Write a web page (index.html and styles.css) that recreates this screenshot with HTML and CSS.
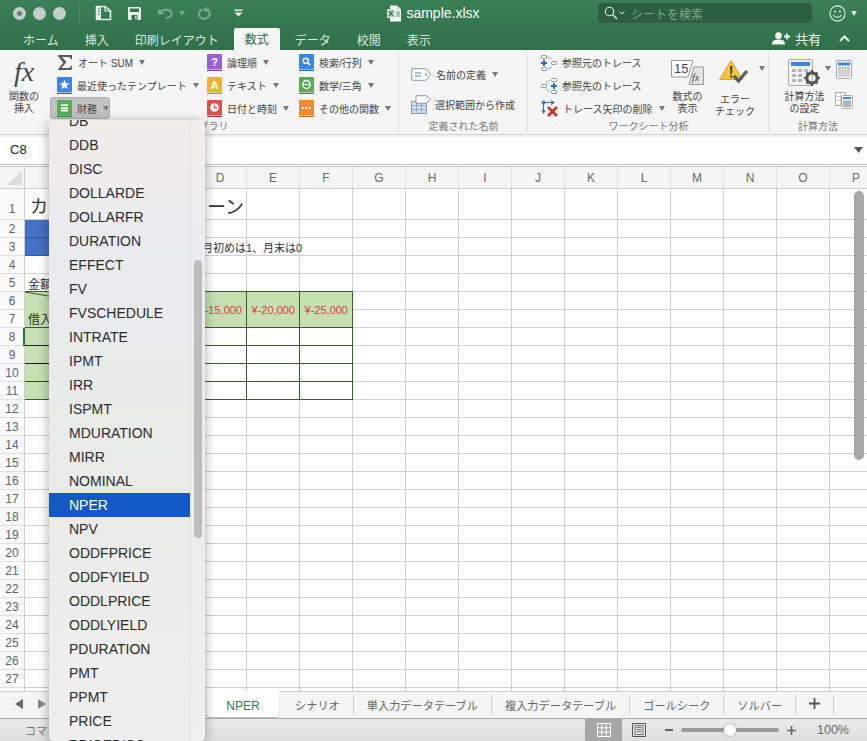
FILE: index.html
```html
<!DOCTYPE html>
<html lang="ja">
<head>
<meta charset="utf-8">
<title>sample.xlsx</title>
<link rel="stylesheet" href="styles.css">
</head>
<body>
<div class="app">
  <header class="chrome">
    <div class="titlebar">
      <div class="tb-left">
        <span class="light light-main"></span><span class="light"></span><span class="light"></span>
        <span class="tb-sep"></span>
        <svg class="qa qa-side" width="17" height="16" viewBox="0 0 17 16"><path d="M1.5 1.5H10L15.5 6V14.5H1.5Z" fill="none" stroke="#e8f0ea" stroke-width="1.6"/><path d="M10 1.5V6H15.5" fill="none" stroke="#e8f0ea" stroke-width="1.2"/><path d="M2 2H6V14H2Z" fill="#e8f0ea"/><path d="M3 4H5M3 6.5H5M3 9H5" stroke="#33784f"/></svg>
        <svg class="qa qa-save" width="15" height="15" viewBox="0 0 15 15"><path d="M1 2a1 1 0 0 1 1-1H13L14 2V13a1 1 0 0 1-1 1H2a1 1 0 0 1-1-1Z" fill="#e8f0ea"/><path d="M3 2.5H12V6H3Z" fill="#33784f"/><path d="M4.5 9H10.5V14H4.5Z" fill="#33784f"/><path d="M8 10.2H9.6V12.8H8Z" fill="#e8f0ea"/></svg>
        <svg class="qa qa-undo" width="16" height="12" viewBox="0 0 16 12"><path d="M2 6.5C3.5 2.5 12 1 14.5 5.5C15.5 8 13 11 9 11" fill="none" stroke="#7ea98e" stroke-width="2"/><path d="M0.5 1.5L2 8L7.5 6.5Z" fill="#7ea98e"/></svg>
        <span class="caret caret-dim"></span>
        <svg class="qa qa-redo" width="13" height="14" viewBox="0 0 13 14"><path d="M4 3.5C1 5 0 8 2 11C4 13.5 9 13.5 11 10.5C12 8.5 12 5 9.5 3" fill="none" stroke="#7ea98e" stroke-width="2"/><path d="M9.5 0.5V6.5L4.5 3.5Z" fill="#7ea98e"/></svg>
        <svg class="qa qa-custom" width="9" height="8" viewBox="0 0 9 8"><path d="M0.5 0.5H8.5V2H0.5Z" fill="#e8f0ea"/><path d="M0.5 3.5H8.5L4.5 7.5Z" fill="#e8f0ea"/></svg>
      </div>
      <div class="doc-title">
        <svg width="15" height="17" viewBox="0 0 15 17"><path d="M3 0.5H10L14 4V16.5H3Z" fill="#f4f7f5"/><path d="M10 0.5V4H14" fill="none" stroke="#9ab" stroke-width=".6"/><path d="M0 4H8V13H0Z" fill="#cfdcd4"/><path d="M2 6L6 11M6 6L2 11" stroke="#33784f" stroke-width="1.4"/><path d="M9 7H13M9 9H13M9 11H13" stroke="#33784f" stroke-width=".8"/></svg>
        <span>sample.xlsx</span>
      </div>
      <div class="tb-right">
        <div class="search">
          <svg width="14" height="14" viewBox="0 0 14 14"><circle cx="5.5" cy="5.5" r="4.2" fill="none" stroke="#e8f0ea" stroke-width="1.1"/><path d="M8.5 8.5L13 13" stroke="#e8f0ea" stroke-width="1.3"/></svg>
          <svg class="search-chev" width="6" height="4" viewBox="0 0 6 4"><path d="M.5 .5L3 3L5.5 .5" fill="none" stroke="#e8f0ea"/></svg>
          <span>シートを検索</span>
        </div>
        <svg class="smile" width="17" height="17" viewBox="0 0 17 17"><circle cx="8.5" cy="8.5" r="7.6" fill="none" stroke="#e8f0ea" stroke-width="1.1"/><circle cx="6" cy="6.5" r="1" fill="#e8f0ea"/><circle cx="11" cy="6.5" r="1" fill="#e8f0ea"/><path d="M4.5 10C6 13 11 13 12.5 10" fill="none" stroke="#e8f0ea" stroke-width="1.1"/></svg>
        <span class="caret caret-light"></span>
      </div>
    </div>
    <div class="tabbar">
      <nav class="tabs">
        <span>ホーム</span><span>挿入</span><span>印刷レイアウト</span><span class="tab-active">数式</span><span>データ</span><span>校閲</span><span>表示</span>
      </nav>
      <div class="share">
        <svg width="19" height="13" viewBox="0 0 19 13"><circle cx="6.5" cy="3.6" r="3.4" fill="#f0f5f1"/><path d="M0 12.5C0 8 3 7.4 6.5 7.4S13 8 13 12.5Z" fill="#f0f5f1"/><path d="M15 1.5V7.5M12 4.5H18" stroke="#f0f5f1" stroke-width="1.8"/></svg>
        <span>共有</span>
        <svg class="share-chev" width="11" height="7" viewBox="0 0 11 7"><path d="M1 6L5.5 1.5L10 6" fill="none" stroke="#f0f5f1" stroke-width="2"/></svg>
      </div>
    </div>
  </header>

  <section class="ribbon">
    <div class="group group-lib">
      <div class="group-body">
        <div class="big big-fx">
          <span class="fx">fx</span>
          <span class="big-label">関数の<br>挿入</span>
        </div>
        <div class="rib-col col-a">
          <div class="rib-item"><svg class="ico" width="16" height="17" viewBox="0 0 16 17"><path d="M1 1H15V5.5H14C13.8 4 13 3 11 3H5L9.5 8L4.5 14H11.5C13 14 14 13 14.3 11.5H15.2L14.6 16H1V15.2L6.3 8.8L1 2Z" fill="#5a5a5a"/></svg><span>オート SUM</span><i class="caret"></i></div>
          <div class="rib-item"><svg class="ico" width="15" height="17" viewBox="0 0 15 17"><rect width="15" height="15" rx="1" fill="#3d85e0"/><rect y="15.6" width="15" height="1.4" fill="#2c66b0"/><path d="M7.5 2.8L8.9 6.2L12.4 6.4L9.7 8.7L10.6 12.1L7.5 10.2L4.4 12.1L5.3 8.7L2.6 6.4L6.1 6.2Z" fill="#fff"/></svg><span>最近使ったテンプレート</span><i class="caret"></i></div>
          <div class="rib-item rib-pressed"><svg class="ico" width="15" height="17" viewBox="0 0 15 17"><rect width="15" height="15" rx="1" fill="#56ad55"/><rect y="15.6" width="15" height="1.4" fill="#3f8a40"/><path d="M4 4.2H11V6H4ZM4 6.9H11V8.7H4ZM4 9.6H11V11.4H4Z" fill="#fff"/></svg><span>財務</span><i class="caret"></i></div>
        </div>
        <div class="rib-col col-b">
          <div class="rib-item"><svg class="ico" width="15" height="17" viewBox="0 0 15 17"><rect width="15" height="15" rx="1" fill="#9a5fd0"/><rect y="15.6" width="15" height="1.4" fill="#7444a6"/><text x="7.5" y="12" text-anchor="middle" class="ico-text">?</text></svg><span>論理順</span><i class="caret"></i></div>
          <div class="rib-item"><svg class="ico" width="15" height="17" viewBox="0 0 15 17"><rect width="15" height="15" rx="1" fill="#f0b429"/><rect y="15.6" width="15" height="1.4" fill="#c58f14"/><text x="7.5" y="12" text-anchor="middle" class="ico-text">A</text></svg><span>テキスト</span><i class="caret"></i></div>
          <div class="rib-item"><svg class="ico" width="15" height="17" viewBox="0 0 15 17"><rect width="15" height="15" rx="1" fill="#df4f4f"/><rect y="15.6" width="15" height="1.4" fill="#b23535"/><circle cx="7.5" cy="7.5" r="4.3" fill="#fff"/><path d="M7.5 4.8V7.8H10" fill="none" stroke="#df4f4f" stroke-width="1.2"/></svg><span>日付と時刻</span><i class="caret"></i></div>
        </div>
        <div class="rib-col col-c">
          <div class="rib-item"><svg class="ico" width="15" height="17" viewBox="0 0 15 17"><rect width="15" height="15" rx="1" fill="#3d85e0"/><rect y="15.6" width="15" height="1.4" fill="#2c66b0"/><circle cx="6.7" cy="6.7" r="2.5" fill="none" stroke="#fff" stroke-width="1.4"/><path d="M8.5 8.5L11.2 11.2" stroke="#fff" stroke-width="1.6"/></svg><span>検索/行列</span><i class="caret"></i></div>
          <div class="rib-item"><svg class="ico" width="15" height="17" viewBox="0 0 15 17"><rect width="15" height="15" rx="1" fill="#56ad55"/><rect y="15.6" width="15" height="1.4" fill="#3f8a40"/><ellipse cx="7.5" cy="7.5" rx="3.6" ry="4" fill="none" stroke="#fff" stroke-width="1.3"/><path d="M4.5 7.5H10.5" stroke="#fff" stroke-width="1.2"/></svg><span>数学/三角</span><i class="caret"></i></div>
          <div class="rib-item"><svg class="ico" width="15" height="17" viewBox="0 0 15 17"><rect width="15" height="15" rx="1" fill="#f08a2c"/><rect y="15.6" width="15" height="1.4" fill="#c46a18"/><path d="M3 6.7H5V8.7H3ZM6.5 6.7H8.5V8.7H6.5ZM10 6.7H12V8.7H10Z" fill="#fff"/></svg><span>その他の関数</span><i class="caret"></i></div>
        </div>
      </div>
      <div class="group-label label-lib">関数ライブラリ</div>
    </div>

    <div class="group group-names">
      <div class="group-body">
        <div class="rib-col col-names">
          <div class="rib-item"><svg class="ico" width="21" height="13" viewBox="0 0 21 13"><path d="M2 .7H15L20 6.5L15 12.3H2A1.3 1.3 0 0 1 .7 11V2A1.3 1.3 0 0 1 2 .7Z" fill="#fff" stroke="#8a9aa8"/><path d="M4 5H10M4 8H10" stroke="#3d85e0" stroke-width="1.1"/><circle cx="15" cy="6.5" r="1" fill="#8a9aa8"/></svg><span>名前の定義</span><i class="caret"></i></div>
          <div class="rib-item"><svg class="ico" width="20" height="19" viewBox="0 0 20 19"><rect x=".5" y="6.5" width="15" height="12" fill="#cfe0f2" stroke="#8a9aa8"/><path d="M.5 10.5H15.5M.5 14.5H15.5M5.5 6.5V18.5M10.5 6.5V18.5" stroke="#8a9aa8" stroke-width=".7"/><path d="M5 .7H15L19.5 4.5L15 8.3H5Z" fill="#fff" stroke="#8a9aa8"/></svg><span>選択範囲から作成</span></div>
        </div>
      </div>
      <div class="group-label">定義された名前</div>
    </div>

    <div class="group group-audit">
      <div class="group-body">
        <div class="rib-col col-trace">
          <div class="rib-item"><svg class="ico" width="16" height="16" viewBox="0 0 16 16"><rect x=".5" y=".5" width="5" height="3" rx="1" fill="#fff" stroke="#777" stroke-width=".8"/><rect x=".5" y="12.5" width="5" height="3" rx="1" fill="#fff" stroke="#777" stroke-width=".8"/><rect x="10.5" y="6.5" width="5" height="3" rx="1" fill="#fff" stroke="#777" stroke-width=".8"/><path d="M3 5V11M0 8H6" stroke="#2b6fc4" stroke-width="2"/><path d="M7 2L11 4M7 14L11 12" stroke="#3d85e0" stroke-dasharray="1.5 1"/></svg><span>参照元のトレース</span></div>
          <div class="rib-item"><svg class="ico" width="16" height="16" viewBox="0 0 16 16"><rect x="10.5" y=".5" width="5" height="3" rx="1" fill="#fff" stroke="#777" stroke-width=".8"/><rect x="10.5" y="12.5" width="5" height="3" rx="1" fill="#fff" stroke="#777" stroke-width=".8"/><rect x=".5" y="6.5" width="5" height="3" rx="1" fill="#fff" stroke="#777" stroke-width=".8"/><path d="M13 5V11M10 8H16" stroke="#2b6fc4" stroke-width="2"/><path d="M5 5L9 2M5 11L9 14" stroke="#3d85e0" stroke-dasharray="1.5 1"/></svg><span>参照先のトレース</span></div>
          <div class="rib-item"><svg class="ico" width="17" height="17" viewBox="0 0 17 17"><circle cx="2.5" cy="2.5" r="2" fill="#3d85e0"/><path d="M3 2.5H12M10 .5L13 2.5L10 4.5M2.5 4V12M.7 10L2.5 13L4.3 10" fill="none" stroke="#3a6ea8" stroke-width="1.1"/><path d="M7 7L16 16M16 7L7 16" stroke="#cf2d2d" stroke-width="2.6"/></svg><span>トレース矢印の削除</span><i class="caret"></i></div>
        </div>
        <div class="big big-show">
          <svg width="33" height="25" viewBox="0 0 33 25"><path d="M.5 .5H22L17 17H.5Z" fill="#fff" stroke="#999"/><path d="M18 24.5L23 7H32.5V24.5Z" fill="#e4e4e4" stroke="#999"/><text x="3" y="13" class="show-num">15</text><text x="21" y="21" class="show-fx">fx</text></svg>
          <span class="big-label">数式の<br>表示</span>
        </div>
        <div class="big big-err">
          <div class="err-ico">
            <svg width="37" height="26" viewBox="0 0 37 26"><path d="M12 1.5L23.5 20.5H.5Z" fill="#f3c343" stroke="#d9a520"/><path d="M11 7H13.4L13 15H11.4ZM11.2 16.2H13.2V18.4H11.2Z" fill="#4a3b10"/><path d="M15 17L19.5 22L28 12" fill="none" stroke="#5f5f5f" stroke-width="3.4"/></svg>
            <i class="caret"></i>
          </div>
          <span class="big-label label-err">エラー<br>チェック</span>
        </div>
      </div>
      <div class="group-label">ワークシート分析</div>
    </div>

    <div class="group group-calc">
      <div class="group-body">
        <div class="big big-calc">
          <div class="err-ico">
            <svg width="34" height="28" viewBox="0 0 34 28"><rect x=".5" y=".5" width="24" height="26" rx="1.5" fill="#f4f4f4" stroke="#aaa"/><rect x="3" y="3" width="19" height="4" fill="#3d85e0"/><path d="M4 10H8V13H4ZM10 10H14V13H10ZM16 10H20V13H16ZM4 15H8V18H4ZM10 15H14V18H10ZM4 20H8V23H4ZM10 20H14V23H10Z" fill="#b5b5b5"/><circle cx="24" cy="19" r="5.2" fill="none" stroke="#555" stroke-width="3.2"/><path d="M24 11V14M24 24V27M16 19H19M29 19H32M18.5 13.5L20.5 15.5M27.5 22.5L29.5 24.5M18.5 24.5L20.5 22.5M27.5 15.5L29.5 13.5" stroke="#555" stroke-width="2.2"/></svg>
            <i class="caret"></i>
          </div>
          <span class="big-label">計算方法<br>の設定</span>
        </div>
        <div class="calc-small">
          <svg width="16" height="19" viewBox="0 0 16 19"><rect x=".5" y=".5" width="15" height="18" rx="1.5" fill="#f4f4f4" stroke="#aaa"/><rect x="2" y="2.5" width="12" height="3" fill="#3d85e0"/><path d="M2.5 7H13.5V16.5H2.5Z" fill="#b5b5b5"/><path d="M2 9.5H14M2 12H14M2 14.5H14M5.5 7V17M8 7V17M10.5 7V17" stroke="#f4f4f4" stroke-width=".7"/></svg>
          <svg width="18" height="17" viewBox="0 0 18 17"><rect x=".5" y=".5" width="10" height="13" fill="#fff" stroke="#aaa"/><path d="M.5 4.5H10.5M.5 8.5H10.5M5.5 .5V13.5" stroke="#bbb" stroke-width=".7"/><rect x="6.5" y="3.5" width="11" height="13" rx="1" fill="#f4f4f4" stroke="#aaa"/><rect x="8" y="5" width="8" height="2" fill="#3d85e0"/><path d="M8 8.5H16V15H8Z" fill="#b5b5b5"/></svg>
        </div>
      </div>
      <div class="group-label">計算方法</div>
    </div>
  </section>

  <section class="formula">
    <span class="name-box">C8</span>
    <svg class="formula-arrow" width="9" height="6" viewBox="0 0 9 6"><path d="M0 0H9L4.5 6Z" fill="#555"/></svg>
  </section>

  <main class="sheet">
    <div class="col-heads">
      <div class="corner"><svg width="17" height="16" viewBox="0 0 17 16"><path d="M16 1V15H1Z" fill="#dcdcdc"/></svg></div>
      <span class="col-a-head">A</span><span>B</span><span>C</span><span>D</span><span>E</span><span>F</span><span>G</span><span>H</span><span>I</span><span>J</span><span>K</span><span>L</span><span>M</span><span>N</span><span>O</span><span>P</span>
    </div>
    <div class="sheet-body">
      <div class="row-heads">
        <span class="row-first">1</span><span>2</span><span>3</span><span>4</span><span>5</span><span>6</span><span>7</span><span>8</span><span>9</span><span class="row-sel">10</span><span class="row-sel">11</span><span>12</span><span>13</span><span>14</span><span>15</span><span>16</span><span>17</span><span>18</span><span>19</span><span>20</span><span>21</span><span>22</span><span>23</span><span>24</span><span>25</span><span>26</span><span>27</span><span>28</span>
      </div>
      <div class="cells">
        <div class="cell title-a">カ</div>
        <div class="cell title-d">ーン</div>
        <div class="cell blue blue-2"></div>
        <div class="cell blue blue-3"></div>
        <div class="cell note-d">月初めは1、月末は0</div>
        <div class="cell amount-a">金額</div>
        <div class="cell thead corner-a">
          <svg class="diag" viewBox="0 0 100 100" preserveAspectRatio="none"><path d="M0 0L100 82" stroke="#3a5a2a" stroke-width="1" vector-effect="non-scaling-stroke"/></svg>
          <span class="loan">借入</span>
        </div>
        <div class="cell thead money col-d-h">¥-15,000</div>
        <div class="cell thead money col-e-h">¥-20,000</div>
        <div class="cell thead money col-f-h">¥-25,000</div>
        <div class="cell side side-8"></div>
        <div class="cell side side-9"></div>
        <div class="cell side side-10"></div>
        <div class="cell side side-11"></div>
        <div class="cell tbody d8"></div><div class="cell tbody e8"></div><div class="cell tbody f8"></div>
        <div class="cell tbody d9"></div><div class="cell tbody e9"></div><div class="cell tbody f9"></div>
        <div class="cell tbody d10"></div><div class="cell tbody e10"></div><div class="cell tbody f10"></div>
        <div class="cell tbody d11"></div><div class="cell tbody e11"></div><div class="cell tbody f11"></div>
      </div>
    </div>
    <div class="sheet-scroll"></div>
  </main>

  <section class="sheet-tabs">
    <div class="sheet-nav">
      <svg width="8" height="10" viewBox="0 0 8 10"><path d="M8 0V10L0 5Z" fill="#666"/></svg>
      <svg width="8" height="10" viewBox="0 0 8 10"><path d="M0 0V10L8 5Z" fill="#888"/></svg>
    </div>
    <div class="stabs">
      <span class="stab stab-active">NPER</span>
      <span class="stab">シナリオ</span>
      <span class="stab">単入力データテーブル</span>
      <span class="stab">複入力データテーブル</span>
      <span class="stab">ゴールシーク</span>
      <span class="stab">ソルバー</span>
      <span class="stab stab-add"><svg width="11" height="11" viewBox="0 0 11 11"><path d="M5.5 0V11M0 5.5H11" stroke="#555" stroke-width="1.8"/></svg></span>
    </div>
  </section>

  <footer class="status">
    <span class="status-text">コマンド</span>
    <div class="view-btn">
      <svg width="14" height="14" viewBox="0 0 14 14"><path d="M.5 .5H13.5V13.5H.5ZM.5 4.8H13.5M.5 9.2H13.5M4.8 .5V13.5M9.2 .5V13.5" fill="none" stroke="#fff"/></svg>
    </div>
    <svg class="page-btn" width="14" height="14" viewBox="0 0 14 14"><path d="M.5 .5H13.5V13.5H.5Z" fill="none" stroke="#555"/><path d="M3 2.5H11V11.5H3Z" fill="none" stroke="#555" stroke-width=".8"/><path d="M4.5 4.5H9.5M4.5 6.5H9.5M4.5 8.5H9.5" stroke="#555" stroke-width=".8"/></svg>
    <span class="zoom-minus"></span>
    <div class="slider"><span class="knob"></span></div>
    <svg class="zoom-plus" width="9" height="9" viewBox="0 0 9 9"><path d="M4.5 0V9M0 4.5H9" stroke="#666" stroke-width="1.7"/></svg>
    <span class="zoom-val">100%</span>
  </footer>

  <div class="menu">
    <ul class="menu-list">
      <li>DB</li><li>DDB</li><li>DISC</li><li>DOLLARDE</li><li>DOLLARFR</li><li>DURATION</li><li>EFFECT</li><li>FV</li><li>FVSCHEDULE</li><li>INTRATE</li><li>IPMT</li><li>IRR</li><li>ISPMT</li><li>MDURATION</li><li>MIRR</li><li>NOMINAL</li><li class="menu-sel">NPER</li><li>NPV</li><li>ODDFPRICE</li><li>ODDFYIELD</li><li>ODDLPRICE</li><li>ODDLYIELD</li><li>PDURATION</li><li>PMT</li><li>PPMT</li><li>PRICE</li><li>PRICEDISC</li>
    </ul>
    <div class="menu-gutter"><span class="menu-thumb"></span></div>
  </div>
</div>
</body>
</html>
```

FILE: styles.css
```css
* { box-sizing: border-box; }
html, body { margin: 0; height: 100%; overflow: hidden; }
body { font-family: "Liberation Sans", "Noto Sans CJK JP", sans-serif; color: #333; background: #fff; }
.app { position: relative; width: 867px; height: 741px; display: flex; flex-direction: column; overflow: hidden; }

/* chrome */
.chrome { height: 50px; background: linear-gradient(#3a7f56, #2f7049); color: #fff; flex: none; }
.titlebar { height: 26px; display: grid; grid-template-columns: 1fr auto 1fr; align-items: center; }
.tb-left { display: flex; align-items: center; padding-left: 13px; }
.light { width: 13px; height: 13px; border-radius: 50%; background: #c5cdc8; margin-right: 7px; flex: none; position: relative; }
.light-main::after { content: ""; position: absolute; left: 4px; top: 4px; width: 5px; height: 5px; border-radius: 50%; background: #6d7a72; }
.tb-sep { width: 1px; height: 20px; background: #4a8a64; margin-left: 6px; }
.qa { flex: none; }
.qa-side { margin-left: 15px; }
.qa-save { margin-left: 15px; }
.qa-undo { margin-left: 15px; }
.qa-redo { margin-left: 13px; }
.qa-custom { margin-left: 23px; }
.caret { display: inline-block; width: 0; height: 0; border-left: 3.5px solid transparent; border-right: 3.5px solid transparent; border-top: 5px solid #777; flex: none; }
.caret-dim { border-top-color: #7ea98e; margin-left: 6px; }
.caret-light { border-top-color: #dfe9e2; margin-left: 5px; }
.doc-title { display: flex; align-items: center; gap: 4px; font-size: 14px; color: #fff; }
.tb-right { display: flex; align-items: center; justify-content: flex-end; padding-right: 10px; }
.search { width: 214px; height: 20px; border-radius: 4px; background: #2a5f40; display: flex; align-items: center; padding-left: 6px; font-size: 12px; color: #7ea78d; margin-right: 17px; }
.search-chev { margin: 0 6px 0 1px; }
.smile { flex: none; }

.tabbar { height: 24px; display: flex; justify-content: space-between; align-items: flex-end; }
.tabs { display: flex; gap: 26px; padding-left: 23px; font-size: 12px; color: #dbe8df; height: 22px; align-items: center; }
.tab-active { background: #f5f5f5; color: #2a6e47; height: 22px; padding: 0 11px; margin: 0 -11px; line-height: 24px; border-radius: 2px 2px 0 0; }
.share { display: flex; align-items: center; height: 24px; font-size: 13px; color: #f0f5f1; padding-right: 17px; gap: 4px; }
.share-chev { margin-left: 14px; }

/* ribbon */
.ribbon { height: 85px; flex: none; background: #f5f5f5; display: flex; border-bottom: 1px solid #d4d4d4; font-size: 10px; color: #444; }
.group { display: flex; flex-direction: column; position: relative; }
.group::after { content: ""; position: absolute; right: 0; top: 4px; bottom: 2px; width: 1px; background: #dedede; }
.group-calc::after { display: none; }
.group-lib { width: 399px; }
.group-names { width: 129px; }
.group-audit { width: 241px; }
.group-calc { width: 98px; }
.group-body { display: flex; height: 70px; flex: none; }
.group-label { flex: 1; text-align: center; font-size: 10px; color: #777; line-height: 14px; }
.label-lib { padding-right: 12px; }
.rib-col { display: flex; flex-direction: column; padding-top: 1px; }
.rib-item { height: 23px; display: flex; align-items: center; white-space: nowrap; }
.rib-item .caret { margin-left: 6px; border-left-width: 3px; border-right-width: 3px; border-top-width: 5px; }
.ico { flex: none; margin-right: 5px; }
.col-a { width: 150px; margin-left: 9px; }
.col-b { width: 92px; }
.col-c { width: 99px; }
.rib-pressed { width: 60px; margin-left: -7px; padding-left: 7px; background: #c3c3c3; border: 1px solid #aeaeae; border-radius: 3px; height: 22px; margin-top: 0; padding-left: 6px; }
.ico-text { font: bold 11px "Liberation Sans", sans-serif; fill: #fff; }
.big { display: flex; flex-direction: column; align-items: center; }
.big-label { line-height: 12px; text-align: center; }
.big-fx { width: 48px; padding-top: 3px; }
.fx { font: italic 28px "Liberation Serif", serif; color: #484848; line-height: 37px; height: 38px; }
.col-names { padding: 9px 0 0 12px; width: 129px; }
.col-names .rib-item { height: 31px; }
.col-names .rib-item .ico { margin-right: 4px; }
.col-trace { padding-left: 13px; width: 141px; }
.col-trace .rib-item .ico { margin-right: 5px; }
.big-show { width: 33px; margin-left: 2px; padding-top: 10px; }
.big-show svg { margin-bottom: 6px; }
.show-num { font: 13px "Liberation Sans", sans-serif; fill: #444; }
.show-fx { font: italic 10px "Liberation Serif", serif; fill: #444; }
.big-err { margin-left: 12px; width: 52px; padding-top: 9px; }
.err-ico { display: flex; align-items: flex-start; height: 32px; }
.err-ico .caret { margin: 7px 0 0 3px; border-left-width: 3px; border-right-width: 3px; }
.label-err { margin-right: 14px; white-space: nowrap; margin-top: 3px; margin-left: 0; }
.big-calc { padding: 9px 0 0 16px; width: 64px; }
.big-calc .err-ico { height: 32px; }
.big-calc .big-label { white-space: nowrap; margin-left: -9px; }
.calc-small { display: flex; flex-direction: column; gap: 13px; padding: 10px 0 0 2px; align-items: center; }

/* formula */
.formula { height: 32px; flex: none; background: #fff; border-top: 2px solid #f0f0f0; display: flex; align-items: center; justify-content: space-between; padding: 0 4px 2px 10px; border-bottom: 3px double #c2c2c2; }
.name-box { font-size: 13px; color: #222; }

/* sheet */
.sheet { flex: 1; min-height: 0; position: relative; overflow: hidden; background: #fff; }
.col-heads { height: 22px; display: grid; grid-template-columns: 25px 63px repeat(15, 53px); background: #f5f5f5; border-bottom: 1px solid #cfcfcf; font-size: 12px; color: #6a6a6a; }
.col-heads span { display: flex; align-items: center; justify-content: center; border-right: 1px solid #e0e0e0; }
.corner { border-right: 1px solid #d0d0d0; display: flex; align-items: flex-end; justify-content: flex-end; padding: 0 1px 2px 0; }
.sheet-body { display: flex; }
.row-heads { width: 25px; flex: none; display: grid; grid-template-rows: 31px repeat(27, 18px); background: #fafafa; border-right: 1px solid #cfcfcf; font-size: 12px; color: #55656f; }
.row-heads span { display: flex; align-items: center; justify-content: center; border-bottom: 1px solid #e0e0e0; }
.row-first { padding-top: 9px; }
.row-sel { color: #4a6f96; }
.cells {
  flex: 1; height: 503px; display: grid;
  grid-template-columns: 63px repeat(15, 53px);
  grid-template-rows: 31px repeat(27, 18px);
  background-image:
    repeating-linear-gradient(to right, transparent 0 52px, #d0d0d0 52px 53px),
    linear-gradient(#d0d0d0, #d0d0d0),
    repeating-linear-gradient(to bottom, transparent 0 17px, #d0d0d0 17px 18px);
  background-position: 10px 0, 0 30px, 0 31px;
  background-size: auto, 100% 1px, 100% 100%;
  background-repeat: repeat-x, no-repeat, no-repeat;
}
.cell { font-size: 11px; white-space: nowrap; display: flex; align-items: center; min-width: 0; color: #333; }
.title-a { grid-area: 1 / 1; font-size: 18px; padding: 1px 0 0 5px; }
.title-d { grid-area: 1 / 4; font-size: 19px; padding: 1px 0 0 13px; }
.blue { background: #4472c4; grid-column: 1 / span 3; border-bottom: 1px solid #37599a; }
.blue-2 { grid-row: 2; }
.blue-3 { grid-row: 3; }
.note-d { grid-area: 3 / 4; padding-left: 8px; }
.amount-a { grid-area: 5 / 1; padding-left: 3px; font-size: 12px; }
.thead { background: #c6e0b4; border-right: 1px solid #3a5a2a; border-bottom: 1px solid #3a5a2a; box-shadow: 0 -1px 0 #3a5a2a; }
.corner-a { grid-area: 6 / 1 / span 2 / span 3; position: relative; padding: 18px 0 0 3px; font-size: 12px; }
.diag { position: absolute; left: 0; top: 0; width: 100%; height: 100%; }
.loan { position: relative; }
.money { justify-content: flex-end; padding-right: 4px; color: #e0393a; grid-row: 6 / span 2; }
.col-d-h { grid-column: 4; }
.col-e-h { grid-column: 5; }
.col-f-h { grid-column: 6; }
.side { background: #c6e0b4; grid-column: 1 / span 3; border-bottom: 1px solid #222; }
.side-8 { grid-row: 8; box-shadow: -2px 0 0 #217346; }
.side-9 { grid-row: 9; border-bottom-color: #111; }
.side-10 { grid-row: 10; border-bottom-color: #24406e; }
.side-11 { grid-row: 11; border-bottom-color: #3a5a2a; }
.tbody { background: #fff; border-right: 1px solid #3a5a2a; border-bottom: 1px solid #3a5a2a; }
.d8, .d9, .d10, .d11 { grid-column: 4; }
.e8, .e9, .e10, .e11 { grid-column: 5; }
.f8, .f9, .f10, .f11 { grid-column: 6; }
.d8, .e8, .f8 { grid-row: 8; }
.d9, .e9, .f9 { grid-row: 9; }
.d10, .e10, .f10 { grid-row: 10; }
.d11, .e11, .f11 { grid-row: 11; }
.sheet-scroll { position: absolute; right: 3px; top: 24px; width: 10px; height: 269px; border-radius: 5px; background: #a8a8a8; }

/* sheet tabs */
.sheet-tabs { height: 27px; flex: none; background: #f5f5f5; border-top: 1px solid #cfcfcf; display: flex; }
.sheet-nav { width: 207px; display: flex; align-items: center; gap: 15px; padding: 0 0 3px 15px; }
.stabs { display: flex; align-items: flex-start; }
.stab { font-size: 11.2px; color: #666; height: 20px; margin-top: 3px; padding: 0 13px; border-right: 1px solid #d0d0d0; display: flex; align-items: center; white-space: nowrap; }
.stab-active { width: 72px; height: 26px; margin: -1px 3px 0 0; padding: 3px 0 0; justify-content: center; background: #fff; border: 0; border-radius: 0 0 3px 3px; color: #2f7d50; font-size: 12px; box-shadow: 0 1px 1px #bbb; }
.stab-add { width: 38px; justify-content: center; padding: 0 0 3px; }

/* status */
.status { height: 23px; flex: none; background: linear-gradient(#eaeaea, #dedede); border-top: 1px solid #a8a8a8; display: flex; align-items: center; font-size: 11px; color: #777; }
.status-text { margin-left: 25px; width: 560px; }
.view-btn { width: 37px; height: 22px; background: #a6a6a6; display: flex; align-items: center; justify-content: center; }
.page-btn { margin-left: 10px; flex: none; }
.zoom-minus { width: 8px; height: 2px; background: #666; margin-left: 19px; flex: none; }
.slider { position: relative; width: 98px; height: 4px; margin-left: 8px; border-radius: 2px; background: #9a9a9a; flex: none; }
.knob { position: absolute; left: 43px; top: -4px; width: 12px; height: 12px; border-radius: 50%; background: #fff; box-shadow: 0 0 2px #888; }
.zoom-plus { margin-left: 8px; flex: none; }
.zoom-val { margin-left: 21px; font-size: 12.5px; color: #666; }

/* dropdown */
.menu { position: absolute; left: 49px; top: 120px; width: 156px; height: 621px; border-radius: 5px; overflow: hidden; background: linear-gradient(#f1eceb 0, #e8eaee 25%, #e9ebe8 50%, #eeeeee 100%); box-shadow: 0 2px 12px rgba(0,0,0,.35); }
.menu-list { list-style: none; margin: -11px 0 0; padding: 0; width: 141px; }
.menu-list li { height: 24px; line-height: 24px; padding-left: 20px; font-size: 14px; color: #2b2b2b; }
.menu-list .menu-sel { background: #1259c3; color: #fff; }
.menu-gutter { position: absolute; right: 0; top: 0; bottom: 0; width: 15px; border-left: 1px solid #e2e2e2; background: rgba(255,255,255,.12); }
.menu-thumb { position: absolute; left: 3px; top: 140px; width: 8px; height: 278px; border-radius: 4px; background: #bdbdbd; }
```
